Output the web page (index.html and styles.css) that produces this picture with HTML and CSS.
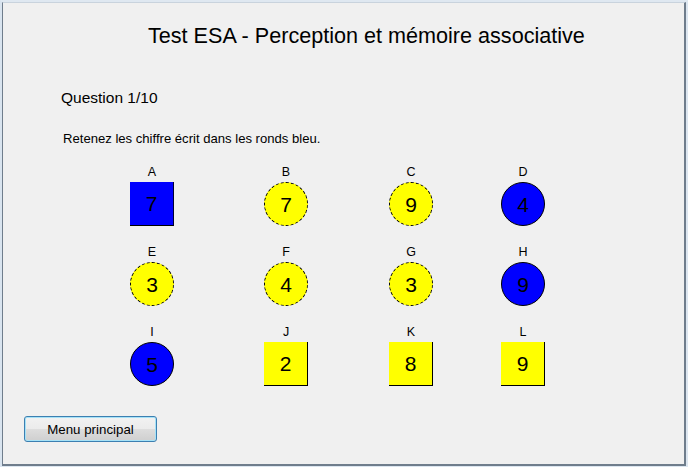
FILE: index.html
```html
<!DOCTYPE html>
<html lang="fr">
<head>
<meta charset="utf-8">
<title>Test ESA</title>
<link rel="stylesheet" href="styles.css">
</head>
<body>
<div class="window">
  <div class="client">
    <h1 class="title">Test ESA - Perception et mémoire associative</h1>
    <div class="question">Question 1/10</div>
    <p class="instruction">Retenez les chiffre écrit dans les ronds bleu.</p>
    <div class="board">
      <div class="cell"><span class="lbl">A</span><div class="shape square blue">7</div></div>
      <div class="cell"><span class="lbl">B</span><div class="shape circle yellow">7</div></div>
      <div class="cell"><span class="lbl">C</span><div class="shape circle yellow">9</div></div>
      <div class="cell"><span class="lbl">D</span><div class="shape circle blue">4</div></div>
      <div class="cell"><span class="lbl">E</span><div class="shape circle yellow">3</div></div>
      <div class="cell"><span class="lbl">F</span><div class="shape circle yellow">4</div></div>
      <div class="cell"><span class="lbl">G</span><div class="shape circle yellow">3</div></div>
      <div class="cell"><span class="lbl">H</span><div class="shape circle blue">9</div></div>
      <div class="cell"><span class="lbl">I</span><div class="shape circle blue">5</div></div>
      <div class="cell"><span class="lbl">J</span><div class="shape square yellow">2</div></div>
      <div class="cell"><span class="lbl">K</span><div class="shape square yellow">8</div></div>
      <div class="cell"><span class="lbl">L</span><div class="shape square yellow">9</div></div>
    </div>
    <button class="btn" type="button">Menu principal</button>
  </div>
</div>
</body>
</html>
```

FILE: styles.css
```css
html, body {
  margin: 0;
  padding: 0;
  background: #f0f0f0;
}
body {
  font-family: "Liberation Sans", Arial, sans-serif;
  color: #000;
}
.window {
  width: 688px;
  height: 467px;
  box-sizing: border-box;
  border-left: 2px solid #d9e4ef;
  border-top: 2px solid #dfe8f1;
  border-right: 2px solid #dce6f0;
  border-bottom: 1px solid #dce6f0;
  background: #f0f0f0;
}
.client {
  box-sizing: border-box;
  height: 100%;
  border-left: 1px solid #6f7d8c;
  border-top: 1px solid #c9d3dd;
  border-right: 2px solid #6f7d8c;
  border-bottom: 2px solid #6f7d8c;
  background: #f0f0f0;
  padding: 0;
  display: flex;
  flex-direction: column;
}
.title {
  margin: 20px 0 0 145px;
  font-size: 21.6px;
  font-weight: normal;
  line-height: 25px;
}
.question {
  margin: 41px 0 0 58px;
  font-size: 15.5px;
  line-height: 18px;
}
.instruction {
  margin: 24px 0 0 60px;
  font-size: 13.1px;
  line-height: 15px;
}
.board {
  margin: 19px 0 0 127px;
  display: grid;
  grid-template-columns: 134px 125px 112px 44px;
  grid-auto-rows: 80px;
}
.cell {
  width: 44px;
  display: flex;
  flex-direction: column;
  align-items: center;
}
.lbl {
  font-size: 12.5px;
  line-height: 15px;
  height: 17px;
}
.shape {
  box-sizing: border-box;
  width: 44px;
  height: 44px;
  display: flex;
  align-items: center;
  justify-content: center;
  font-size: 21px;
  line-height: 1;
}
.square.blue {
  background: #0000ff;
  border-bottom: 1px solid #000;
  border-right: 1px solid #000033;
}
.square.yellow {
  background: #ffff00;
  border-bottom: 1px solid #000;
  border-right: 1px solid #000;
}
.circle {
  border-radius: 50%;
}
.circle.yellow {
  background: #ffff00;
  border: 1px dashed #000;
}
.circle.blue {
  background: #0000ff;
  border: 1px solid #000;
}
.btn {
  margin: 11px 0 0 21px;
  width: 133px;
  height: 26px;
  box-sizing: border-box;
  border: 1px solid #3c7fb1;
  border-radius: 3px;
  background: linear-gradient(#f2f2f2 0%, #ebebeb 50%, #dddddd 51%, #cfcfcf 100%);
  box-shadow: inset 0 0 0 1px #a6e2f7;
  font-family: "Liberation Sans", Arial, sans-serif;
  font-size: 13.3px;
  color: #000;
  padding: 0;
}
```
